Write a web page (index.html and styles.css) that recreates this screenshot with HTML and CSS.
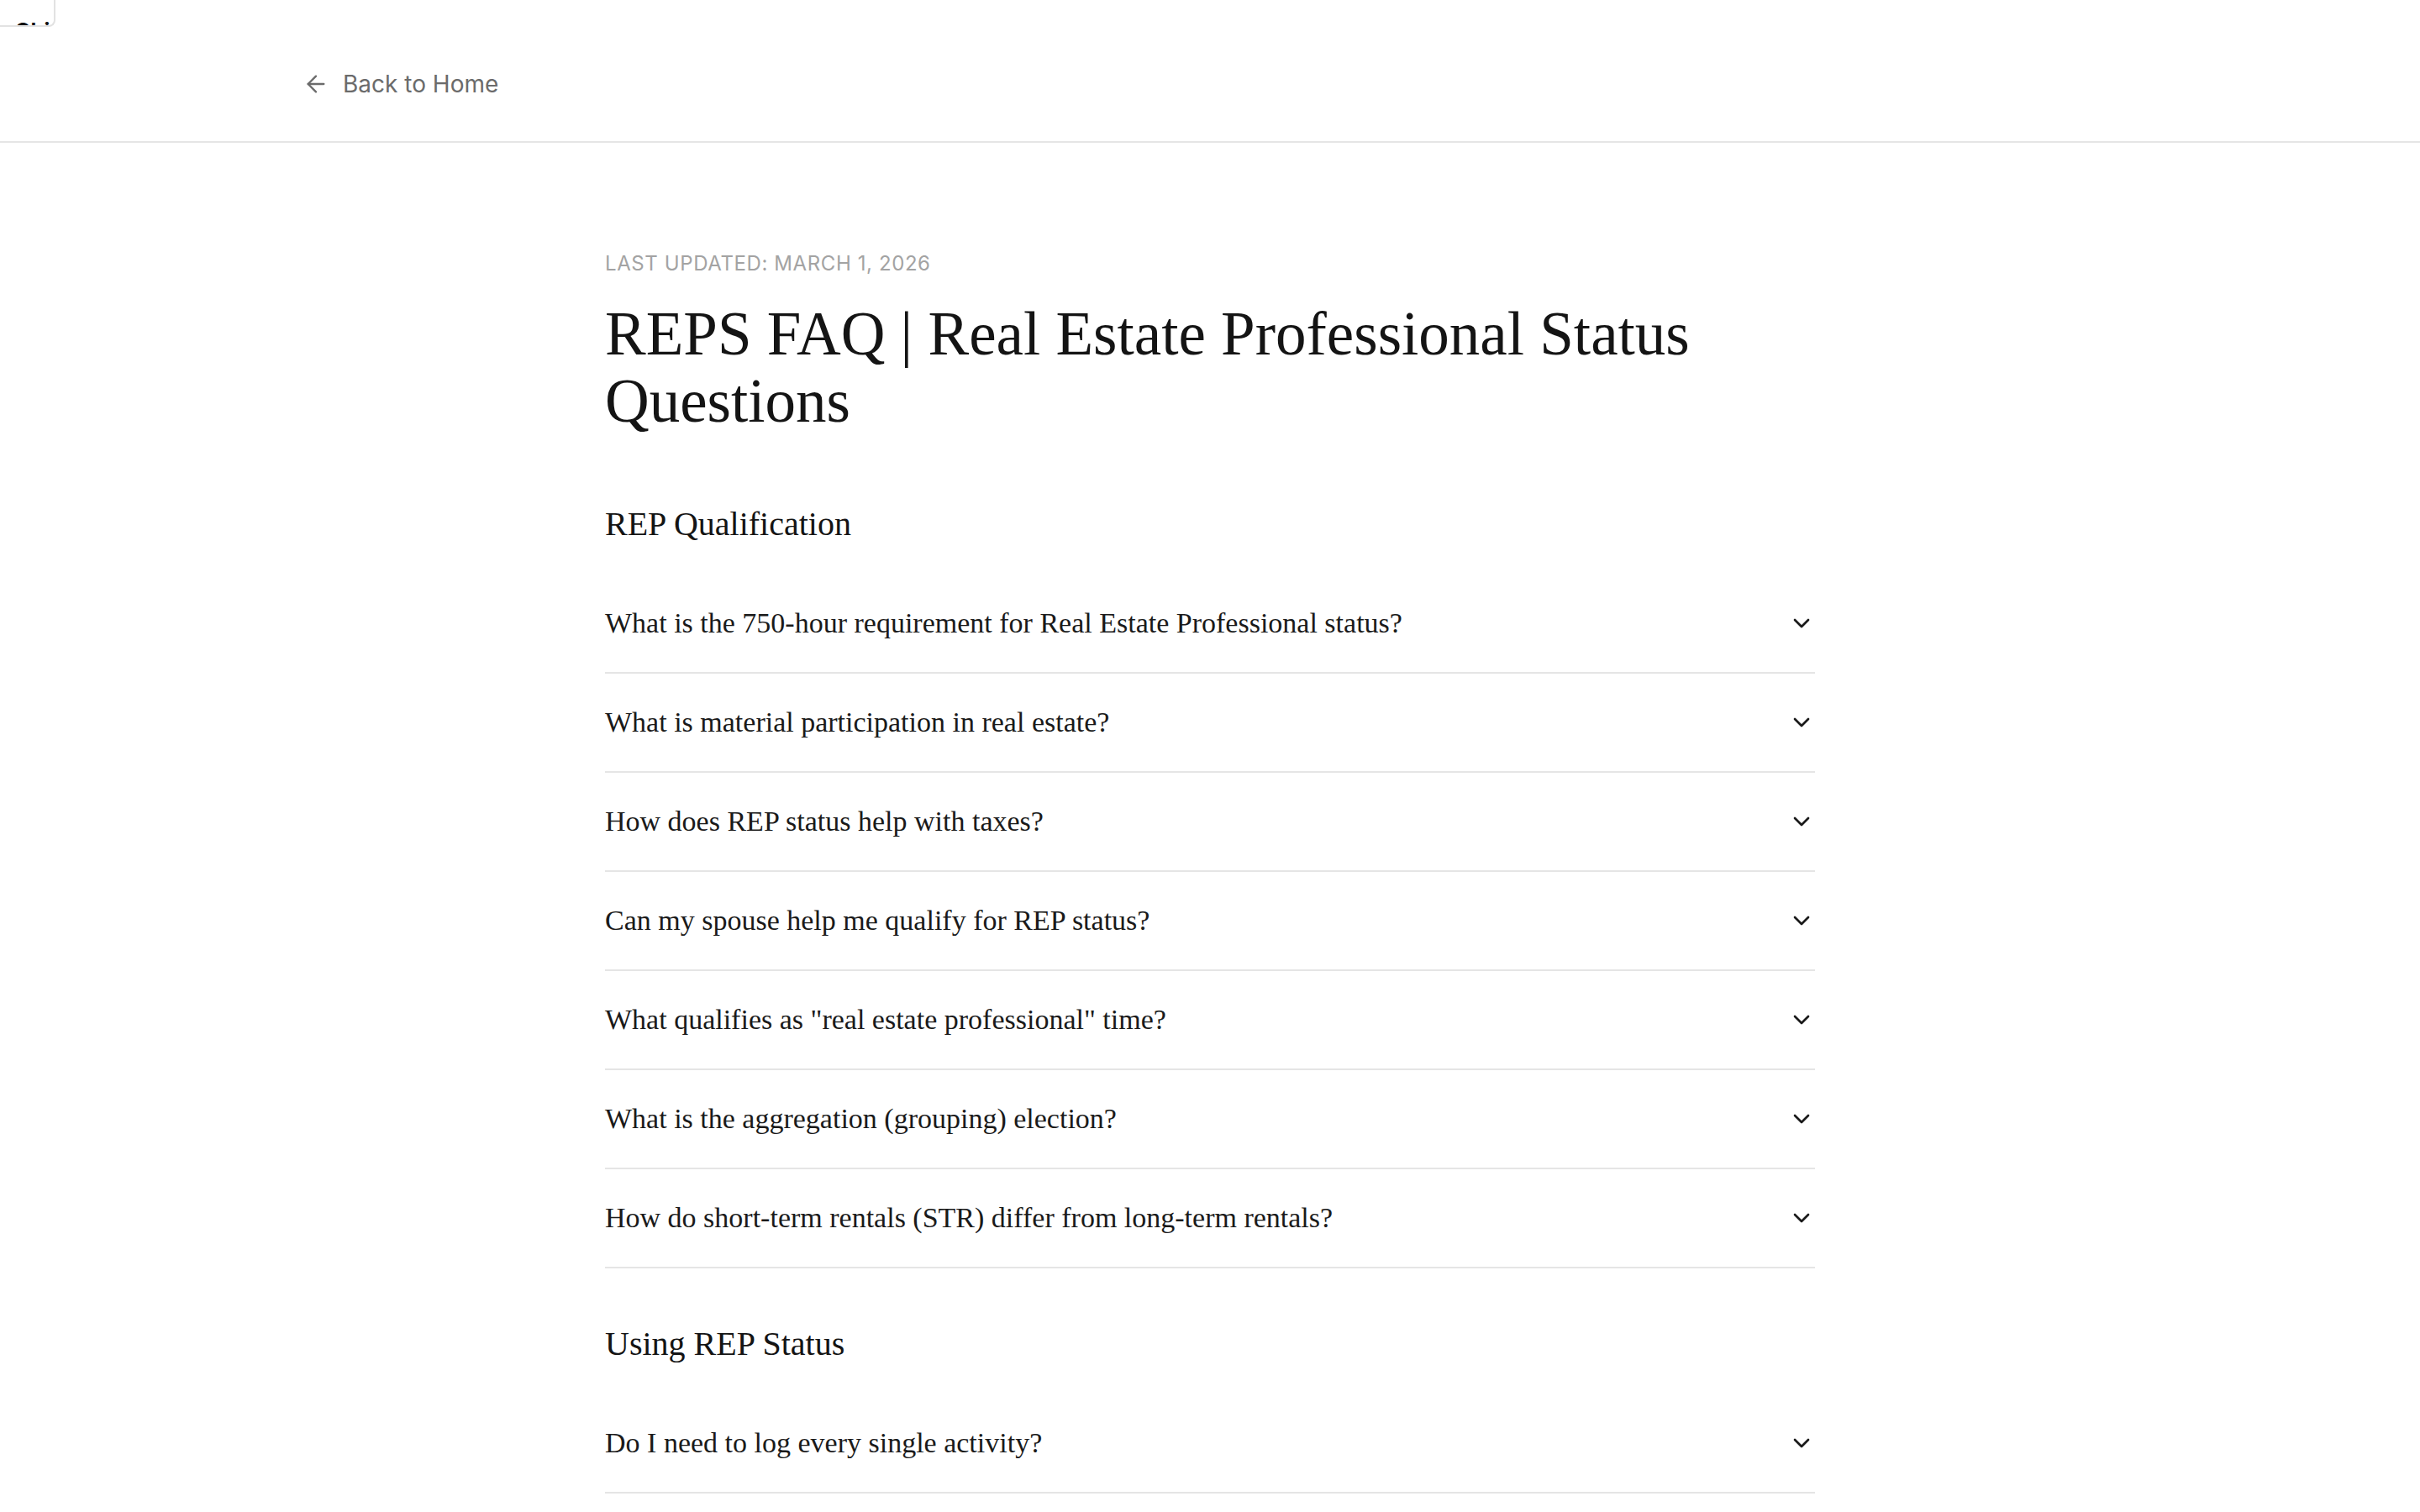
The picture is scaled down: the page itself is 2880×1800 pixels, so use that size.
FILE: index.html
```html
<!DOCTYPE html>
<html lang="en">
<head>
<meta charset="utf-8">
<title>REPS FAQ | Real Estate Professional Status Questions</title>
<link rel="stylesheet" href="styles.css">
</head>
<body>
<a class="skip" href="#main">Skip to content</a>
<header class="topbar">
  <a class="back" href="#">
    <svg class="back-icon" viewBox="0 0 24 24" fill="none" stroke="currentColor" stroke-width="1.75" stroke-linecap="round" stroke-linejoin="round"><path d="m12 19-7-7 7-7"/><path d="M19 12H5"/></svg>
    <span>Back to Home</span>
  </a>
</header>
<main class="page" id="main">
  <p class="updated">Last updated: March 1, 2026</p>
  <h1 class="title">REPS FAQ | Real Estate Professional Status Questions</h1>

  <section class="faq-section">
    <h2 class="section-title">REP Qualification</h2>
    <div class="faq-item"><span>What is the 750-hour requirement for Real Estate Professional status?</span><svg class="chev" viewBox="0 0 24 24" fill="none" stroke="currentColor" stroke-width="2" stroke-linecap="round" stroke-linejoin="round"><path d="m6 9 6 6 6-6"/></svg></div>
    <div class="faq-item"><span>What is material participation in real estate?</span><svg class="chev" viewBox="0 0 24 24" fill="none" stroke="currentColor" stroke-width="2" stroke-linecap="round" stroke-linejoin="round"><path d="m6 9 6 6 6-6"/></svg></div>
    <div class="faq-item"><span>How does REP status help with taxes?</span><svg class="chev" viewBox="0 0 24 24" fill="none" stroke="currentColor" stroke-width="2" stroke-linecap="round" stroke-linejoin="round"><path d="m6 9 6 6 6-6"/></svg></div>
    <div class="faq-item"><span>Can my spouse help me qualify for REP status?</span><svg class="chev" viewBox="0 0 24 24" fill="none" stroke="currentColor" stroke-width="2" stroke-linecap="round" stroke-linejoin="round"><path d="m6 9 6 6 6-6"/></svg></div>
    <div class="faq-item"><span>What qualifies as "real estate professional" time?</span><svg class="chev" viewBox="0 0 24 24" fill="none" stroke="currentColor" stroke-width="2" stroke-linecap="round" stroke-linejoin="round"><path d="m6 9 6 6 6-6"/></svg></div>
    <div class="faq-item"><span>What is the aggregation (grouping) election?</span><svg class="chev" viewBox="0 0 24 24" fill="none" stroke="currentColor" stroke-width="2" stroke-linecap="round" stroke-linejoin="round"><path d="m6 9 6 6 6-6"/></svg></div>
    <div class="faq-item"><span>How do short-term rentals (STR) differ from long-term rentals?</span><svg class="chev" viewBox="0 0 24 24" fill="none" stroke="currentColor" stroke-width="2" stroke-linecap="round" stroke-linejoin="round"><path d="m6 9 6 6 6-6"/></svg></div>
  </section>

  <section class="faq-section">
    <h2 class="section-title">Using REP Status</h2>
    <div class="faq-item"><span>Do I need to log every single activity?</span><svg class="chev" viewBox="0 0 24 24" fill="none" stroke="currentColor" stroke-width="2" stroke-linecap="round" stroke-linejoin="round"><path d="m6 9 6 6 6-6"/></svg></div>
  </section>
</main>
</body>
</html>
```
FILE: styles.css
```css
html {
  zoom: 2;
}
body {
  margin: 0;
  background: #ffffff;
  color: #1a1a1a;
  font-family: Inter, "Liberation Sans", sans-serif;
}
.skip {
  position: absolute;
  left: 0;
  top: 0;
  width: 33px;
  height: 16px;
  box-sizing: border-box;
  overflow: hidden;
  background: #fff;
  border: 1px solid #e2e2e2;
  border-top: 0;
  border-left: 0;
  border-radius: 0 0 4px 0;
  padding: 9px 0 0 9px;
  font: 600 14px/20px Inter, sans-serif;
  color: #111;
  text-decoration: none;
  white-space: nowrap;
}
.topbar {
  border-bottom: 1px solid #e5e5e5;
  padding: 40px 180px 24px;
}
.back {
  display: flex;
  align-items: center;
  gap: 8px;
  height: 20px;
  width: max-content;
  color: #6b6b6b;
  text-decoration: none;
  font-size: 14px;
  line-height: 20px;
}
.back-icon {
  display: block;
  width: 16px;
  height: 16px;
}
.page {
  max-width: 720px;
  margin: 0 auto;
  padding: 64px 0 40px;
}
.updated {
  margin: 0 0 14px;
  font-size: 12px;
  line-height: 16px;
  letter-spacing: 0.025em;
  text-transform: uppercase;
  color: #a3a3a3;
}
.title {
  margin: 0 0 41px;
  font-family: "Liberation Serif", "DejaVu Serif", serif;
  font-weight: 400;
  font-size: 36.5px;
  line-height: 40px;
  color: #141414;
}
.faq-section + .faq-section {
  margin-top: 33px;
}
.section-title {
  margin: 0 0 18px;
  font-family: "Liberation Serif", "DejaVu Serif", serif;
  font-weight: 400;
  font-size: 20px;
  line-height: 24px;
  color: #141414;
}
.faq-item {
  display: flex;
  align-items: center;
  justify-content: space-between;
  padding: 20px 0;
  border-bottom: 1px solid #e5e5e5;
  font-family: "Liberation Serif", "DejaVu Serif", serif;
  font-size: 17px;
  line-height: 18px;
  color: #1a1a1a;
}
.chev {
  display: block;
  width: 16px;
  height: 16px;
  flex: none;
  color: #1a1a1a;
}
```
